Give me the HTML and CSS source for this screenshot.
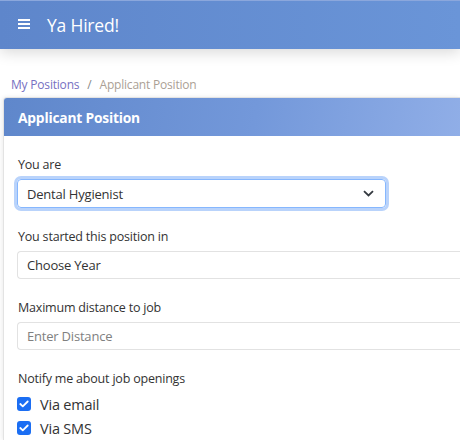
FILE: index.html
```html
<!DOCTYPE html>
<html lang="en">
<head>
<meta charset="utf-8">
<title>Ya Hired!</title>
<link rel="stylesheet" href="styles.css">
</head>
<body>
<header class="topbar">
  <span class="menu-icon" aria-hidden="true">
    <svg width="12" height="10" viewBox="0 0 12 10"><rect x="0" y="0" width="12" height="2" fill="#fff"/><rect x="0" y="4" width="12" height="2" fill="#fff"/><rect x="0" y="8" width="12" height="2" fill="#fff"/></svg>
  </span>
  <span class="brand">Ya Hired!</span>
</header>
<nav class="crumbs">
  <a class="crumb-link" href="#">My Positions</a>
  <span class="crumb-sep">/</span>
  <span class="crumb-current">Applicant Position</span>
</nav>
<section class="card">
  <div class="card-head">Applicant Position</div>
  <div class="card-body">
    <div class="group">
      <div class="label">You are</div>
      <div class="select focus">
        <span>Dental Hygienist</span>
        <svg class="chev" width="11" height="7" viewBox="0 0 11 7"><path d="M1 1.2 5.5 5.5 10 1.2" fill="none" stroke="#343a40" stroke-width="1.8"/></svg>
      </div>
    </div>
    <div class="group">
      <div class="label">You started this position in</div>
      <div class="field">Choose Year</div>
    </div>
    <div class="group">
      <div class="label">Maximum distance to job</div>
      <div class="field placeholder">Enter Distance</div>
    </div>
    <div class="label notify">Notify me about job openings</div>
    <div class="check-row">
      <span class="box"><svg width="10" height="8" viewBox="0 0 10 8"><path d="M1.3 4 3.8 6.3 8.7 1.5" fill="none" stroke="#fff" stroke-width="1.8" stroke-linecap="round" stroke-linejoin="round"/></svg></span>
      <span class="check-text">Via email</span>
    </div>
    <div class="check-row">
      <span class="box"><svg width="10" height="8" viewBox="0 0 10 8"><path d="M1.3 4 3.8 6.3 8.7 1.5" fill="none" stroke="#fff" stroke-width="1.8" stroke-linecap="round" stroke-linejoin="round"/></svg></span>
      <span class="check-text">Via SMS</span>
    </div>
  </div>
</section>
</body>
</html>
```
FILE: styles.css
```css
html, body {
  margin: 0;
  padding: 0;
  overflow: hidden;
  background: #fff;
  font-family: "Open Sans", "Noto Sans", sans-serif;
  color: #333;
}
.topbar {
  height: 49px;
  box-sizing: border-box;
  border-top: 1px solid #8ba7dc;
  background: linear-gradient(to right, #5e86cb, #6a95d8);
  display: flex;
  align-items: center;
  padding-left: 18px;
  box-shadow: 0 3px 14px rgba(0,0,0,0.16);
  position: relative;
  z-index: 1;
}
.menu-icon {
  display: flex;
  width: 12px;
  height: 10px;
  margin-top: -2px;
}
.brand {
  color: #fff;
  font-size: 17.5px;
  margin-left: 17px;
  letter-spacing: -0.2px;
}
.crumbs {
  padding: 23px 0 0 11px;
  height: 25px;
  font-size: 12px;
  display: flex;
  align-items: center;
  letter-spacing: -0.2px;
}
.crumb-link {
  color: #7670c2;
  text-decoration: none;
}
.crumb-sep {
  color: #888;
  margin: 0 8px;
}
.crumb-current {
  color: #ab9f95;
}
.card {
  margin: 0 0 0 3px;
  border: 1px solid #e3e3e3;
  border-right: none;
  border-bottom: none;
  border-radius: 4px 0 0 0;
  box-shadow: -1px 0 4px rgba(0,0,0,0.08);
}
.card-head {
  height: 38px;
  box-sizing: border-box;
  background: linear-gradient(100deg, #5f87cb 0%, #7398da 55%, #90aee7 100%);
  border-radius: 3px 0 0 0;
  color: #fff;
  font-weight: 700;
  font-size: 13.8px;
  display: flex;
  align-items: center;
  padding-left: 14px;
  letter-spacing: -0.2px;
}
.card-body {
  padding: 19px 0 0 14px;
}
.group {
  margin-bottom: 19px;
}
.label {
  font-size: 12.5px;
  line-height: 20px;
  margin-bottom: 4px;
  letter-spacing: -0.2px;
}
.select {
  width: 369px;
  height: 29px;
  box-sizing: border-box;
  margin-left: -1px;
  border: 1px solid #86b7fe;
  border-radius: 4px;
  box-shadow: 0 0 0 3px #b9d3fb;
  display: flex;
  align-items: center;
  justify-content: space-between;
  padding: 0 11px 0 9px;
  font-size: 13px;
  color: #333;
  letter-spacing: -0.2px;
}
.chev {
  display: block;
}
.field {
  height: 28px;
  box-sizing: border-box;
  margin-left: -1px;
  border: 1px solid #e2e2e2;
  border-right: none;
  border-radius: 4px 0 0 4px;
  display: flex;
  align-items: center;
  padding-left: 9px;
  font-size: 13px;
  color: #333;
  letter-spacing: -0.2px;
}
.placeholder {
  color: #808080;
}
.notify {
  margin-bottom: 3px;
}
.check-row {
  height: 24px;
  display: flex;
  align-items: center;
  margin-left: -1px;
}
.box {
  width: 14px;
  height: 14px;
  border-radius: 3px;
  background: #1b6ef3;
  display: flex;
  align-items: center;
  justify-content: center;
}
.check-text {
  font-size: 14.5px;
  margin-left: 9px;
  letter-spacing: -0.2px;
}
```
